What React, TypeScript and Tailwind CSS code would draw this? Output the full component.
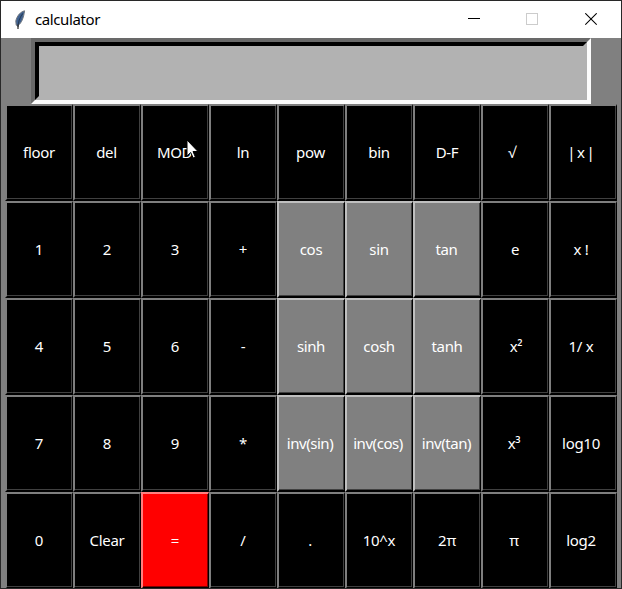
import React from 'react';

type Tone = 'black' | 'gray' | 'red';
type Key = { label: string; tone?: Tone; shift?: number; tracking?: string };

const tight = 'tracking-[-0.45px]';

const rows: Key[][] = [
  [{ label: 'floor' }, { label: 'del', shift: -0.5 }, { label: 'MOD', tracking: tight, shift: -0.5 }, { label: 'ln' }, { label: 'pow', shift: -0.5 }, { label: 'bin' }, { label: 'D-F' }, { label: '√', shift: -3 }, { label: '| x |', shift: -2.5, tracking: 'tracking-[-1.2px]' }],
  [{ label: '1' }, { label: '2' }, { label: '3' }, { label: '+' }, { label: 'cos', tone: 'gray' }, { label: 'sin', tone: 'gray' }, { label: 'tan', tone: 'gray', shift: -0.5 }, { label: 'e' }, { label: 'x !', shift: -2 }],
  [{ label: '4' }, { label: '5' }, { label: '6' }, { label: '-' }, { label: 'sinh', tone: 'gray', tracking: tight }, { label: 'cosh', tone: 'gray' }, { label: 'tanh', tone: 'gray' }, { label: 'x²', shift: 1 }, { label: '1/ x', shift: -2 }],
  [{ label: '7' }, { label: '8' }, { label: '9' }, { label: '*' }, { label: 'inv(sin)', tone: 'gray', shift: -1, tracking: tight }, { label: 'inv(cos)', tone: 'gray', shift: -1, tracking: tight }, { label: 'inv(tan)', tone: 'gray', shift: -0.5, tracking: tight }, { label: 'x³', shift: -1 }, { label: 'log10', shift: -2 }],
  [{ label: '0' }, { label: 'Clear' }, { label: '=', tone: 'red' }, { label: '/' }, { label: '.', shift: -1 }, { label: '10^x' }, { label: '2π' }, { label: 'π', shift: -1 }, { label: 'log2', shift: -2 }],
];

const outer: Record<Tone, string> = {
  black: 'border-t-[#7f7f7f] border-l-[#7f7f7f] bg-black',
  gray: 'border-t-[#bfbfbf] border-l-[#bfbfbf] bg-[#808080]',
  red: 'border-t-[#ff7f7f] border-l-[#ff7f7f] bg-[#ff0000]',
};
const inner: Record<Tone, string> = {
  black: 'border-[#404040]',
  gray: 'border-[#404040]',
  red: 'border-[#7f0000]',
};

function CalcButton({ label, tone = 'black', shift = 0, tracking = 'tracking-[-0.3px]' }: Key) {
  return (
    <button className={`h-[97px] w-[68px] border-t-2 border-r border-b-2 border-l-2 border-r-black border-b-black ${outer[tone]}`}>
      <span className={`flex h-full w-full items-center justify-center border-r border-b ${inner[tone]}`}>
        <span className={`text-[15px] leading-5 whitespace-pre text-white ${tracking}`} style={{ transform: `translateX(${shift}px)` }}>
          {label}
        </span>
      </span>
    </button>
  );
}

export default function App() {
  return (
    <div
      className="relative h-[589px] w-[622px] overflow-hidden border border-[#282828] bg-[#808080]"
      style={{ fontFamily: '"Segoe UI", "Noto Sans", "Open Sans", sans-serif' }}
    >
      <header className="flex h-[37px] items-center bg-white">
        <svg className="ml-[13px] h-[20px] w-[13px]" viewBox="0 0 13 20">
          <path d="M10.6 0.8C6.5 1.8 2.8 6 1.8 11l.4 4.2 1.8.4C7.5 13 9.6 8 10.6.8z" fill="#3f6191" stroke="#74797f" strokeWidth="1" />
          <path d="M8.8 3.5C6 7 4.3 11 4 17" fill="none" stroke="#263c57" strokeWidth="1.1" />
          <path d="M4 14.5v4.5" stroke="#333" strokeWidth="1.3" />
        </svg>
        <h1 className="ml-2 text-[15px] leading-5 tracking-[-0.4px] text-black">
          <span className="relative -top-px">calculator</span>
        </h1>
        <div className="ml-auto flex items-center pr-[24px]">
          <svg className="h-[13px] w-[12px]" viewBox="0 0 12 13" shapeRendering="crispEdges">
            <path d="M0 5.5h12" stroke="#000" />
          </svg>
          <svg className="ml-[46px] h-[13px] w-[12px]" viewBox="0 0 12 13" shapeRendering="crispEdges">
            <rect x=".5" y=".5" width="11" height="11" fill="none" stroke="#ccc" />
          </svg>
          <svg className="ml-[47px] h-[13px] w-[12px]" viewBox="0 0 12 13">
            <path d="M.3 .3l11.4 11.4M11.7 .3L.3 11.7" stroke="#000" strokeWidth="1.1" />
          </svg>
        </div>
      </header>
      <div className="ml-[30px] h-[66px] w-[560px] border-4 border-t-[#696969] border-r-[#fcfcfc] border-b-[#fcfcfc] border-l-[#696969]">
        <div className="h-full w-full border-4 border-t-black border-r-[#b2b2b2] border-b-[#b2b2b2] border-l-black bg-[#b2b2b2]" />
      </div>
      <main className="ml-1 grid w-[612px] grid-cols-9">
        {rows.flat().map((key) => (
          <CalcButton key={key.label} {...key} />
        ))}
      </main>
      <svg className="absolute top-[138px] left-[185px] h-[20px] w-[13px]" viewBox="0 0 13 20">
        <path d="M1 1v16l3.7-3.5L7.2 19l2.2-1-2.4-5.5h5z" fill="#fff" stroke="#000" strokeWidth="1" />
      </svg>
    </div>
  );
}
